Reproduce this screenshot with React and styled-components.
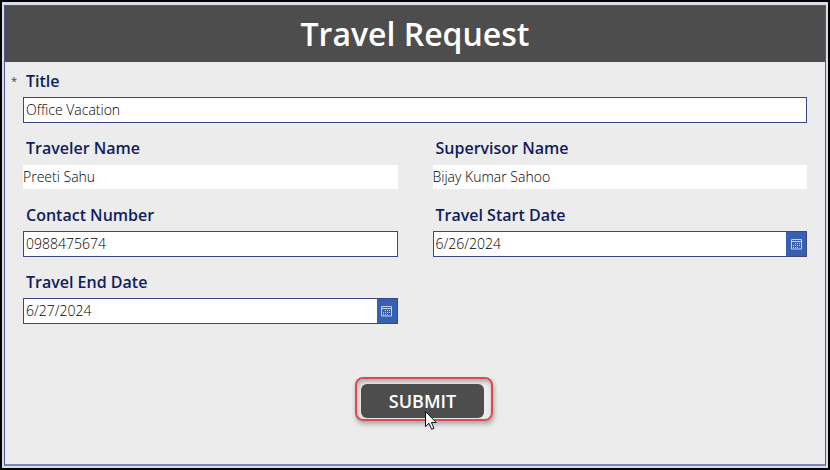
import React, { useState } from "react";
import styled, { createGlobalStyle } from "styled-components";

const GlobalStyle = createGlobalStyle`
  *,
  *::before,
  *::after {
    box-sizing: border-box;
  }

  body {
    margin: 0;
    background: #000000;
    font-family: "Open Sans", "Noto Sans", sans-serif;
  }

  input,
  button {
    font-family: inherit;
  }
`;

const Page = styled.div`
  display: flex;
  min-height: 100vh;
  padding: 2px;
  background: #000000;
`;

const Canvas = styled.div`
  display: flex;
  flex: 1;
  padding: 3px 2px 2px;
  background: #d9dde9;
`;

const Screen = styled.main`
  display: flex;
  flex: 1;
  flex-direction: column;
  border: 1px solid #4c5590;
  border-bottom: 2px solid #7d87ad;
  background: #ececec;
`;

const Header = styled.header`
  display: flex;
  align-items: center;
  justify-content: center;
  height: 56px;
  border-bottom: 1px solid #43477c;
  background: #4d4d4d;
`;

const Heading = styled.h1`
  margin: 0;
  color: #ffffff;
  font-size: 32px;
  font-weight: 600;
  line-height: 44px;
`;

const Form = styled.form`
  display: flex;
  flex-direction: column;
  padding: 5px 18px 16px;
`;

const Fields = styled.div`
  display: grid;
  grid-template-columns: 1fr 1fr;
  gap: 11px 35px;
`;

const Field = styled.div`
  display: flex;
  flex-direction: column;
  min-width: 0;
  grid-column: ${({ $wide }) => ($wide ? "1 / -1" : "auto")};
`;

const Label = styled.label`
  position: relative;
  height: 30px;
  padding-left: 3px;
  color: #101d5e;
  font-size: 16px;
  font-weight: 600;
  line-height: 28px;
`;

const Required = styled.span`
  position: absolute;
  left: -12px;
  color: #444444;
  font-size: 11px;
  font-weight: 400;
`;

const TextInput = styled.input`
  width: 100%;
  height: 26px;
  padding: 0 2px 1px;
  border: 1px solid #3c4682;
  border-radius: 0;
  outline: none;
  background: #ffffff;
  color: #000000;
  font-size: 14px;
  font-weight: 300;
`;

const PlainInput = styled(TextInput)`
  padding: 0 0 1px;
  border-width: 1px 0;
  border-color: #ececec;
`;

const DateBox = styled.div`
  display: flex;
  height: 26px;
  border: 1px solid #3c4682;
`;

const DateInput = styled(TextInput)`
  flex: 1;
  height: 100%;
  min-width: 0;
  border: 0;
`;

const DateButton = styled.button`
  display: flex;
  align-items: center;
  justify-content: center;
  width: 20px;
  padding: 0;
  border: 0;
  background: #3860b2;
  color: #c3d3f3;
`;

const Actions = styled.div`
  display: flex;
  justify-content: center;
  margin-top: 53px;
  padding-left: 18px;
`;

const Highlight = styled.div`
  position: relative;
  padding: 5px 7px 1px 4px;
  border: 2px solid #dc4a50;
  border-radius: 8px;
  box-shadow: 1px 3px 5px rgba(0, 0, 0, 0.3),
    inset 1px 3px 4px rgba(0, 0, 0, 0.25);
`;

const SubmitButton = styled.button`
  display: block;
  width: 123px;
  height: 34px;
  padding: 0;
  border: 0;
  border-radius: 6px;
  background: #4d4d4d;
  color: #ffffff;
  font-size: 18px;
  font-weight: 600;
`;

const Pointer = styled.svg`
  position: absolute;
  top: 31px;
  left: 67px;
  pointer-events: none;
`;

const CalendarIcon = () => (
  <svg width="11" height="11" viewBox="0 0 11 11" fill="none" aria-hidden="true">
    <path d="M.5 .5h10v9.5H.5zM.5 2.5h10" stroke="currentColor" />
    <path
      d="M4 4.5h1M6 4.5h1M8 4.5h1M2 6.5h1M4 6.5h1M6 6.5h1M8 6.5h1M2 8.5h1M4 8.5h1M6 8.5h1"
      stroke="currentColor"
    />
  </svg>
);

const fields = [
  { name: "title", label: "Title", type: "text", wide: true, required: true },
  { name: "traveler", label: "Traveler Name", type: "plain" },
  { name: "supervisor", label: "Supervisor Name", type: "plain" },
  { name: "contact", label: "Contact Number", type: "text" },
  { name: "startDate", label: "Travel Start Date", type: "date" },
  { name: "endDate", label: "Travel End Date", type: "date" },
];

const App = () => {
  const [request, setRequest] = useState({
    title: "Office Vacation",
    traveler: "Preeti Sahu",
    supervisor: "Bijay Kumar Sahoo",
    contact: "0988475674",
    startDate: "6/26/2024",
    endDate: "6/27/2024",
  });

  const handleChange = (e) => {
    setRequest({ ...request, [e.target.name]: e.target.value });
  };

  const renderControl = ({ name, type, required }) => {
    const props = {
      id: name,
      name,
      type: "text",
      value: request[name],
      required,
      onChange: handleChange,
    };

    if (type === "plain") {
      return <PlainInput {...props} />;
    }

    if (type === "date") {
      return (
        <DateBox>
          <DateInput {...props} />
          <DateButton type="button" aria-label="Open calendar">
            <CalendarIcon />
          </DateButton>
        </DateBox>
      );
    }

    return <TextInput {...props} />;
  };

  return (
    <>
      <GlobalStyle />
      <Page>
        <Canvas>
          <Screen>
            <Header>
              <Heading>Travel Request</Heading>
            </Header>
            <Form onSubmit={(e) => e.preventDefault()}>
              <Fields>
                {fields.map((field) => (
                  <Field key={field.name} $wide={field.wide}>
                    <Label htmlFor={field.name}>
                      {field.required && <Required>*</Required>}
                      {field.label}
                    </Label>
                    {renderControl(field)}
                  </Field>
                ))}
              </Fields>
              <Actions>
                <Highlight>
                  <SubmitButton type="submit">SUBMIT</SubmitButton>
                  <Pointer width="14" height="21" viewBox="0 0 14 21" aria-hidden="true">
                    <path
                      d="M1.5 1.5v15l3.5-3.2 2.6 6 2.4-1-2.6-5.8h4.8z"
                      fill="#ffffff"
                      stroke="#111111"
                    />
                  </Pointer>
                </Highlight>
              </Actions>
            </Form>
          </Screen>
        </Canvas>
      </Page>
    </>
  );
};

export default App;
